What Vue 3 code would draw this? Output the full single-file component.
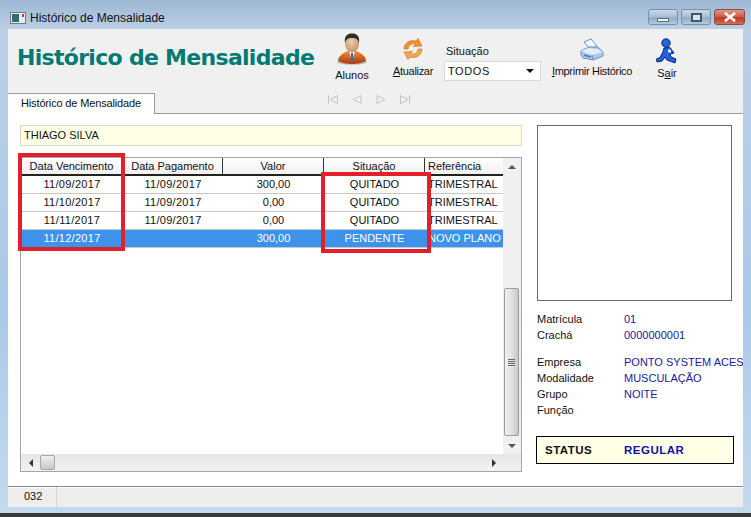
<template>
  <div class="window">
    <div class="titlebar">
      <svg class="app-icon" width="16" height="12" viewBox="0 0 16 12">
        <rect x="0.5" y="0.5" width="15" height="11" fill="#e8eef2" stroke="#6d7a80" />
        <rect x="2" y="2" width="7" height="8" fill="#2f6f6a" />
        <rect x="12" y="2" width="2" height="3" fill="#c33" />
      </svg>
      <span class="title-text">Histórico de Mensalidade</span>
      <div class="win-controls">
        <div class="win-btn">
          <span class="min-glyph"></span>
        </div>
        <div class="win-btn">
          <span class="max-glyph"></span>
        </div>
        <div class="win-btn close">
          <svg width="14" height="10" viewBox="0 0 14 10">
            <path d="M2 1 L12 9 M12 1 L2 9" stroke="#fff" stroke-width="2.6" />
          </svg>
        </div>
      </div>
    </div>

    <div class="client">
      <div class="toolbar">
        <h1 class="page-title">Histórico de Mensalidade</h1>

        <div class="tool tool-alunos">
          <svg width="34" height="34" viewBox="0 0 34 34">
            <defs>
              <radialGradient id="skin" cx="0.45" cy="0.4" r="0.7">
                <stop offset="0" stop-color="#f0d0ae" />
                <stop offset="1" stop-color="#b98a64" />
              </radialGradient>
              <linearGradient id="suit" x1="0" y1="0" x2="0" y2="1">
                <stop offset="0" stop-color="#f58a35" />
                <stop offset="1" stop-color="#a83a12" />
              </linearGradient>
            </defs>
            <ellipse cx="17" cy="29" rx="15" ry="3" fill="#c9c4bf" />
            <path d="M3 28 C3 23 8 20 13 18 L21 18 C26 20 31 23 31 28 C25 32 9 32 3 28 Z" fill="url(#suit)" />
            <path d="M14 18 L20 18 L17 29 Z" fill="#fff" />
            <path d="M16 20 L18 20 L18.4 26 L17 29 L15.6 26 Z" fill="#2a6fb5" />
            <ellipse cx="17" cy="10.5" rx="7" ry="9" fill="url(#skin)" />
            <path d="M10 10 C9 3 12 0.5 17 0.5 C22 0.5 25 3 24 10 C23 6 21 5 17 5 C13 5 11 6 10 10 Z" fill="#2f2f2a" />
          </svg>
          <span class="tool-label">Alunos</span>
        </div>

        <div class="tool tool-atualizar">
          <svg width="22" height="22" viewBox="0 0 22 22">
            <path d="M2 11 C2 5 8 1 14 3 L16 0.5 L20 8 L11.5 8.5 L13.5 6 C9.5 5 6.5 7.5 6 11 Z" fill="#f09030" stroke="#c8701e" stroke-width="0.6" />
            <path d="M20 11 C20 17 14 21 8 19 L6 21.5 L2 14 L10.5 13.5 L8.5 16 C12.5 17 15.5 14.5 16 11 Z" fill="#f2a850" stroke="#c8701e" stroke-width="0.6" />
          </svg>
          <span class="tool-label narrow"><u>A</u>tualizar</span>
        </div>

        <div class="situacao">
          <label class="situacao-label">Situação</label>
          <div class="select-box">
            <span>TODOS</span>
            <span class="select-arrow"></span>
          </div>
        </div>

        <div class="tool tool-imprimir">
          <svg width="24" height="23" viewBox="0 0 24 23">
            <path d="M4 4 L11 1 L17 8 L10 11 Z" fill="#f6f9fd" stroke="#6f92bd" />
            <path d="M1 13 L9 9 L18 9 L23 14 L23 18 L13 22 L3 20 L1 17 Z" fill="#a9c8ec" stroke="#6f92bd" />
            <path d="M1 13 L12 17 L23 14 L17 11 L9 10 Z" fill="#e3eef9" />
            <path d="M12 17 L13 22" stroke="#6f92bd" />
            <path d="M4 17 L11 19" stroke="#4f78ad" stroke-width="1.5" />
          </svg>
          <span class="tool-label narrow"><u>I</u>mprimir Histórico</span>
        </div>

        <div class="tool tool-sair">
          <svg width="22" height="26" viewBox="0 0 22 26">
            <circle cx="10" cy="5" r="4.2" fill="#1f66e0" stroke="#0a2470" />
            <path d="M8 10 L14 9.5 L18 15 L14 16 L15 19 L20 21 L19 25 L11 22 L9 19 L6 23 L1 24 L0.5 21 L4 19.5 L7 14 Z" fill="#1d62e6" stroke="#0a2470" />
            <rect x="12" y="11.5" width="3" height="3" fill="#e2ecff" />
          </svg>
          <span class="tool-label">S<u>a</u>ir</span>
        </div>
      </div>

      <div class="tabrow">
        <div class="tab">Histórico de Mensalidade</div>
        <div class="nav">
          <svg v-for="(d, i) in navPaths" :key="i" width="12" height="9" viewBox="0 0 12 9">
            <path :d="d" fill="none" stroke="#c4c4c4" />
          </svg>
        </div>
      </div>

      <div class="main">
        <div class="left">
          <div class="name-field">THIAGO SILVA</div>

          <div class="grid-box">
            <div class="grid-top">
              <div class="grid-data">
                <div class="row head">
                  <div v-for="c in columns" :key="c.title" class="cell" :class="c.cls">{{ c.title }}</div>
                </div>
                <div
                  v-for="(r, i) in rows"
                  :key="i"
                  class="row"
                  :class="{ selected: i === 3 }"
                >
                  <div class="cell c1 date">{{ r[0] }}</div>
                  <div class="cell c2 date">{{ r[1] }}</div>
                  <div class="cell c3">{{ r[2] }}</div>
                  <div class="cell c4">{{ r[3] }}</div>
                  <div class="cell c5">{{ r[4] }}</div>
                </div>
              </div>
              <div class="vscroll">
                <span class="arrow up"></span>
                <div class="vthumb"><span class="grip"></span></div>
                <span class="arrow down"></span>
              </div>
            </div>
            <div class="hscroll">
              <span class="arrow left-a"></span>
              <div class="hthumb"></div>
              <span class="arrow right-a"></span>
            </div>
            <div class="mark mark-a"></div>
            <div class="mark mark-b"></div>
          </div>
        </div>

        <div class="right">
          <div class="photo"></div>
          <div class="info first">
            <div v-for="f in infoA" :key="f[0]" class="info-row">
              <span class="info-key">{{ f[0] }}</span><span class="info-val">{{ f[1] }}</span>
            </div>
          </div>
          <div class="info second">
            <div v-for="f in infoB" :key="f[0]" class="info-row">
              <span class="info-key">{{ f[0] }}</span><span class="info-val">{{ f[1] }}</span>
            </div>
          </div>
          <div class="status">
            <span class="status-key">STATUS</span><span class="status-val">REGULAR</span>
          </div>
        </div>
      </div>

      <div class="statusbar">
        <div class="status-cell">032</div>
      </div>
    </div>
  </div>
</template>

<script setup>
const navPaths = [
  'M1.5 0.5 V8.5 M10.5 0.5 L3 4.5 L10.5 8.5 Z',
  'M10 0.5 L2 4.5 L10 8.5 Z',
  'M2 0.5 L10 4.5 L2 8.5 Z',
  'M10.5 0.5 V8.5 M1.5 0.5 L9 4.5 L1.5 8.5 Z'
]

const columns = [
  { title: 'Data Vencimento', cls: 'c1' },
  { title: 'Data Pagamento', cls: 'c2' },
  { title: 'Valor', cls: 'c3' },
  { title: 'Situação', cls: 'c4' },
  { title: 'Referência', cls: 'c5' }
]

const rows = [
  ['11/09/2017', '11/09/2017', '300,00', 'QUITADO', 'TRIMESTRAL'],
  ['11/10/2017', '11/09/2017', '0,00', 'QUITADO', 'TRIMESTRAL'],
  ['11/11/2017', '11/09/2017', '0,00', 'QUITADO', 'TRIMESTRAL'],
  ['11/12/2017', '', '300,00', 'PENDENTE', 'NOVO PLANO']
]

const infoA = [
  ['Matrícula', '01'],
  ['Crachá', '0000000001']
]

const infoB = [
  ['Empresa', 'PONTO SYSTEM ACESSO'],
  ['Modalidade', 'MUSCULAÇÃO'],
  ['Grupo', 'NOITE'],
  ['Função', '']
]
</script>

<style scoped>
.window {
  width: 751px;
  height: 517px;
  display: flex;
  flex-direction: column;
  background: linear-gradient(to bottom, #9db7d3 0, #bcd0e6 29px, #a9c9e8 60%, #c3d9ee 100%);
  font-family: "Liberation Sans", Arial, sans-serif;
  font-size: 11px;
  color: #111;
  overflow: hidden;
  border-bottom: 4px solid #3a3a3a;
  box-sizing: border-box;
  position: relative;
}
.titlebar {
  height: 29px;
  flex: none;
  display: flex;
  align-items: center;
  padding: 0 6px 0 10px;
  box-sizing: border-box;
}
.app-icon {
  margin-top: 6px;
}
.title-text {
  margin-left: 4px;
  margin-top: 7px;
  font-size: 12px;
  color: #111;
}
.win-controls {
  margin-left: auto;
  display: flex;
  gap: 3px;
  margin-top: 5px;
}
.win-btn {
  width: 30px;
  height: 16px;
  box-sizing: border-box;
  border: 1px solid #7a8ea8;
  border-radius: 3px;
  background: linear-gradient(to bottom, #c9d8e8, #a8bfd8 50%, #8fabc8 55%, #b4cade);
  display: flex;
  align-items: center;
  justify-content: center;
}
.win-btn.close {
  width: 31px;
  border-color: #8a4a40;
  background: linear-gradient(to bottom, #e09a8c, #cc5a44 50%, #b83a22 55%, #d0705c);
}
.min-glyph {
  width: 12px;
  height: 4px;
  margin-top: 5px;
  background: #eef2f6;
  border: 1px solid #5f6f82;
  box-sizing: border-box;
}
.max-glyph {
  width: 11px;
  height: 9px;
  background: #d8e2ec;
  border: 2px solid #46566a;
  box-sizing: border-box;
}
.client {
  flex: 1;
  margin: 0 8px 6px;
  display: flex;
  flex-direction: column;
  background: #f0f0f0;
  min-height: 0;
}
.toolbar {
  height: 64px;
  flex: none;
  display: flex;
  align-items: flex-start;
  position: relative;
}
.page-title {
  margin: 14px 0 0 9px;
  width: 300px;
  flex: none;
  font-family: "DejaVu Sans", Verdana, sans-serif;
  font-size: 22px;
  letter-spacing: -0.7px;
  line-height: 30px;
  font-weight: 700;
  color: #007a73;
  white-space: nowrap;
}
.tool {
  flex: none;
  display: flex;
  flex-direction: column;
  align-items: center;
}
.tool-label {
  white-space: nowrap;
  line-height: 14px;
}
.tool-label.narrow {
  letter-spacing: -0.3px;
}
.tool-alunos {
  margin: 4px 0 0 16px;
  width: 38px;
}
.tool-alunos .tool-label {
  margin-top: 1px;
}
.tool-atualizar {
  margin: 9px 0 0 20px;
  width: 44px;
}
.tool-atualizar .tool-label {
  margin-top: 4px;
}
.situacao {
  flex: none;
  margin: 15px 0 0 9px;
  width: 97px;
  display: flex;
  flex-direction: column;
}
.situacao-label {
  margin-left: 2px;
  line-height: 14px;
}
.select-box {
  margin-top: 3px;
  height: 20px;
  background: #fff;
  border: 1px solid #d9d9d9;
  box-sizing: border-box;
  display: flex;
  align-items: center;
  justify-content: space-between;
  padding: 0 6px 0 3px;
  letter-spacing: 0.6px;
}
.select-arrow {
  border-left: 4px solid transparent;
  border-right: 4px solid transparent;
  border-top: 4px solid #111;
}
.tool-imprimir {
  margin: 9px 0 0 11px;
  width: 80px;
}
.tool-imprimir .tool-label {
  margin-top: 3px;
}
.tool-sair {
  margin: 9px 0 0 23px;
  width: 24px;
}
.tool-sair .tool-label {
  margin-top: 2px;
}
.tabrow {
  height: 21px;
  flex: none;
  display: flex;
  align-items: flex-start;
  border-bottom: 1px solid #9a9a9a;
  box-sizing: border-box;
  position: relative;
}
.tab {
  width: 147px;
  height: 21px;
  box-sizing: border-box;
  background: #fff;
  border: 1px solid #9a9a9a;
  border-bottom: none;
  border-left: none;
  text-align: center;
  line-height: 19px;
  letter-spacing: -0.15px;
}
.nav {
  margin: 2px 0 0 172px;
  display: flex;
  gap: 12px;
}
.main {
  flex: 1;
  display: flex;
  background: #fff;
  padding: 11px 0 0 12px;
  min-height: 0;
}
.left {
  width: 502px;
  flex: none;
}
.name-field {
  height: 21px;
  box-sizing: border-box;
  background: #ffffe6;
  border: 1px solid #d8d8d0;
  padding-left: 3px;
  line-height: 18px;
}
.grid-box {
  margin-top: 11px;
  height: 315px;
  box-sizing: border-box;
  border: 1px solid #a6a6a6;
  position: relative;
  display: flex;
  flex-direction: column;
  background: #fff;
}
.grid-top {
  flex: 1;
  display: flex;
  min-height: 0;
}
.grid-data {
  flex: 1;
  min-width: 0;
  overflow: hidden;
}
.row {
  display: flex;
  height: 18px;
  box-sizing: border-box;
  border-bottom: 1px solid #c8c8c8;
  line-height: 17px;
}
.row.head {
  height: 18px;
  background: linear-gradient(to bottom, #fff, #f0f0f0);
  border-bottom: 2px solid #222;
  line-height: 17px;
}
.row.selected {
  background: #3d92ea;
  color: #fff;
}
.cell {
  flex: none;
  text-align: center;
  overflow: hidden;
  white-space: nowrap;
  box-sizing: border-box;
}
.date {
  letter-spacing: 0.3px;
}
.head .cell {
  border-right: 1px solid #333;
}
.c1 {
  width: 102px;
}
.c2 {
  width: 100px;
}
.c3 {
  width: 101px;
}
.c4 {
  width: 101px;
}
.c5 {
  width: 77px;
  text-align: left;
  padding-left: 3px;
}
.head .c5 {
  border-right: none;
}
.vscroll {
  width: 18px;
  flex: none;
  background: #f0f0f0;
  position: relative;
  display: flex;
  flex-direction: column;
  align-items: center;
}
.vthumb {
  position: absolute;
  left: 1px;
  top: 130px;
  width: 15px;
  height: 148px;
  box-sizing: border-box;
  border: 1px solid #9c9c9c;
  border-radius: 2px;
  background: linear-gradient(to right, #f0f0f0, #e2e2e2 50%, #c8c8c8);
  display: flex;
  align-items: center;
  justify-content: center;
}
.grip {
  width: 7px;
  height: 7px;
  background: repeating-linear-gradient(to bottom, #6a6a6a 0, #6a6a6a 1px, transparent 1px, transparent 2px);
}
.arrow {
  position: absolute;
  width: 0;
  height: 0;
}
.arrow.up {
  top: 7px;
  border-left: 4px solid transparent;
  border-right: 4px solid transparent;
  border-bottom: 4px solid #555;
}
.arrow.down {
  bottom: 6px;
  border-left: 4px solid transparent;
  border-right: 4px solid transparent;
  border-top: 4px solid #555;
}
.hscroll {
  height: 17px;
  flex: none;
  background: linear-gradient(to bottom, #e6e6e6, #f2f2f2);
  position: relative;
}
.hthumb {
  position: absolute;
  left: 19px;
  top: 1px;
  width: 15px;
  height: 15px;
  box-sizing: border-box;
  border: 1px solid #a8a8a8;
  border-radius: 2px;
  background: linear-gradient(to bottom, #f0f0f0, #c8c8c8);
}
.arrow.left-a {
  left: 8px;
  top: 5px;
  border-top: 4px solid transparent;
  border-bottom: 4px solid transparent;
  border-right: 4px solid #333;
}
.arrow.right-a {
  left: 471px;
  top: 5px;
  border-top: 4px solid transparent;
  border-bottom: 4px solid transparent;
  border-left: 4px solid #333;
}
.mark {
  position: absolute;
  box-sizing: border-box;
  border: 4px solid #e2202c;
  pointer-events: none;
}
.mark-a {
  left: -3px;
  top: -5px;
  width: 107px;
  height: 98px;
}
.mark-b {
  left: 300px;
  top: 14px;
  width: 110px;
  height: 81px;
}
.right {
  width: 218px;
  flex: none;
  margin-left: 3px;
  padding-left: 12px;
  box-sizing: border-box;
  overflow: hidden;
}
.photo {
  width: 195px;
  height: 176px;
  box-sizing: border-box;
  border: 1px solid #6a6a6a;
  background: #fff;
}
.info.first {
  margin-top: 10px;
}
.info.second {
  margin-top: 11px;
}
.info-row {
  height: 16px;
  line-height: 16px;
  display: flex;
  white-space: nowrap;
}
.info-key {
  width: 87px;
  flex: none;
}
.info-val {
  color: #1a1a9c;
}
.status {
  margin: 18px 0 0 -1px;
  width: 198px;
  height: 28px;
  box-sizing: border-box;
  border: 1px solid #000;
  background: #ffffe6;
  display: flex;
  align-items: center;
  padding-left: 8px;
  font-size: 11.5px;
  font-weight: 700;
  letter-spacing: 0.5px;
}
.status-key {
  width: 79px;
  flex: none;
}
.status-val {
  color: #0f0fa8;
}
.statusbar {
  height: 21px;
  flex: none;
  background: #f0eded;
  border-top: 1px solid #8a8a8a;
  box-shadow: inset 0 1px 0 #fff;
  box-sizing: border-box;
  display: flex;
  align-items: center;
}
.status-cell {
  width: 49px;
  height: 100%;
  box-sizing: border-box;
  border-right: 1px solid #d8d4d4;
  padding-left: 16px;
  line-height: 19px;
}
</style>

<style>
html, body {
  margin: 0;
  overflow: hidden;
}
</style>
